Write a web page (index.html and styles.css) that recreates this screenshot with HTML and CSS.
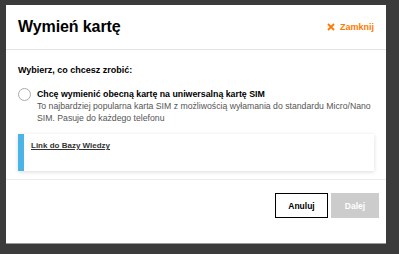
FILE: index.html
```html
<!DOCTYPE html>
<html lang="pl">

<head>
    <meta charset="UTF-8">
    <meta name="viewport" content="width=device-width, initial-scale=1.0">
    <title>Wymień kartę</title>
    <link rel="stylesheet" href="styles.css">
</head>

<body>
    <div class="backdrop">
        <div class="modal">
            <div class="modal-header">
                <h2>Wymień kartę</h2>
                <a class="close" href="#">
                    <svg width="8" height="8" viewBox="0 0 8 8">
                        <path d="M1 1 L7 7 M7 1 L1 7" stroke="#ff7900" stroke-width="1.8" />
                    </svg>
                    Zamknij
                </a>
            </div>

            <div class="modal-body">
                <p class="question">Wybierz, co chcesz zrobić:</p>

                <label class="option">
                    <span class="radio"></span>
                    <span class="option-text">
                        <strong>Chcę wymienić obecną kartę na uniwersalną kartę SIM</strong>
                        <span class="desc">To najbardziej popularna karta SIM z możliwością wyłamania do standardu Micro/Nano SIM. Pasuje do każdego telefonu</span>
                    </span>
                </label>

                <div class="info-box">
                    <a href="#">Link do Bazy Wiedzy</a>
                </div>
            </div>

            <div class="modal-footer">
                <button type="button" class="btn btn-outline">Anuluj</button>
                <button type="button" class="btn btn-disabled" disabled>Dalej</button>
            </div>
        </div>
    </div>
</body>

</html>
```

FILE: styles.css
```css
body {
    font-family: "Liberation Sans", Arial, sans-serif;
    margin: 0;
    padding: 0;
    background-color: #3b3b3b;
    color: #000;
}

.backdrop {
    height: 254px;
    padding: 5px 0 0 6px;
    box-sizing: border-box;
}

.modal {
    width: 380px;
    height: 238px;
    background: #fff;
    box-shadow: 0 1px 0 #9a9a9a;
    display: flex;
    flex-direction: column;
}

.modal-header {
    height: 45px;
    padding: 0 12px;
    display: flex;
    align-items: center;
    justify-content: space-between;
    border-bottom: 1px solid #e4e4e4;
    box-sizing: border-box;
}

.modal-header h2 {
    margin: 0;
    font-size: 16px;
    font-weight: bold;
    letter-spacing: -0.1px;
}

.close {
    color: #ff7900;
    font-size: 9px;
    font-weight: bold;
    text-decoration: none;
    display: flex;
    align-items: center;
    gap: 5px;
}

.modal-body {
    height: 130px;
    padding: 15px 12px 0;
    box-sizing: border-box;
    border-bottom: 1px solid #ececec;
}

.question {
    margin: 0 0 13px;
    font-size: 9px;
    line-height: 10px;
    font-weight: bold;
}

.option {
    display: flex;
    gap: 6px;
    font-size: 8.7px;
    line-height: 11.5px;
}

.radio {
    flex: none;
    width: 11px;
    height: 11px;
    border: 1px solid #aaa;
    border-radius: 50%;
    margin-top: 0;
}

.option-text strong {
    display: block;
    font-size: 8.8px;
    line-height: 12px;
    margin-bottom: 1px;
}

.desc {
    display: block;
    color: #555;
}

.info-box {
    margin-top: 10px;
    height: 37px;
    border-left: 6px solid #4bb4e6;
    box-shadow: 0 1px 4px rgba(0, 0, 0, 0.15);
    padding: 7px 0 0 7px;
    box-sizing: border-box;
    font-size: 8px;
    line-height: 10px;
}

.info-box a {
    color: #333;
    font-weight: bold;
}

.modal-footer {
    display: flex;
    justify-content: flex-end;
    gap: 3px;
    padding: 13px 7px 0;
}

.btn {
    height: 25px;
    font-family: inherit;
    font-size: 8.5px;
    font-weight: bold;
    padding: 0;
    cursor: pointer;
}

.btn-outline {
    width: 53px;
    background: #fff;
    border: 1.5px solid #000;
    color: #000;
}

.btn-disabled {
    width: 48px;
    background: #ccc;
    border: none;
    color: #fff;
}
```
